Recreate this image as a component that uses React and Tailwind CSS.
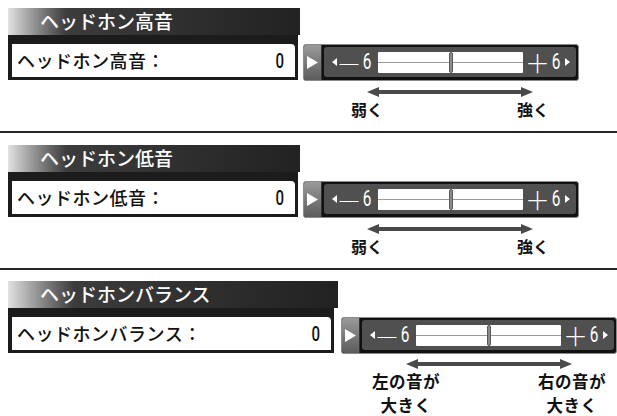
import React from "react";

const jp = { fontFamily: '"Noto Sans CJK JP", "Noto Sans", sans-serif' };
const num = { fontFamily: 'Roboto, "Liberation Sans", sans-serif' };

const sections = [
  {
    title: "ヘッドホン高音",
    head: "w-[292px]",
    body: "w-[290px]",
    gap: "ml-[5px]",
    pad: "pt-[8px] h-[131px]",
    row: "ml-[342px] w-[200px]",
    arrowX: "mx-[17px] mt-[6px]",
    labels: "mt-[2px] font-bold",
    left: ["弱く"],
    right: ["強く"],
    lw: "w-[34px] text-[16px] leading-[20px]",
  },
  {
    title: "ヘッドホン低音",
    head: "w-[292px]",
    body: "w-[290px]",
    gap: "ml-[5px]",
    pad: "pt-[12px] h-[135px]",
    row: "ml-[342px] w-[200px]",
    arrowX: "mx-[17px] mt-[6px]",
    labels: "mt-[2px] font-bold",
    left: ["弱く"],
    right: ["強く"],
    lw: "w-[34px] text-[16px] leading-[20px]",
  },
  {
    title: "ヘッドホンバランス",
    head: "w-[330px]",
    body: "w-[328px]",
    gap: "ml-[7px]",
    pad: "pt-[11px]",
    row: "ml-[362px] w-[238px]",
    arrowX: "mx-[36px] mt-[5px]",
    labels: "mt-[1px] font-semibold",
    left: ["左の音が", "大きく"],
    right: ["右の音が", "大きく"],
    lw: "w-[72px] text-[16.5px] tracking-[0.5px] leading-[23.5px]",
  },
];

const Tri = ({ dir, w = 5, h = 8, color = "#fff" }) => (
  <svg width={w} height={h} viewBox={`0 0 ${w} ${h}`}>
    {dir === "left" ? (
      <polygon points={`${w},0 ${w},${h} 0,${h / 2}`} fill={color} />
    ) : (
      <polygon points={`0,0 0,${h} ${w},${h / 2}`} fill={color} />
    )}
  </svg>
);

const Slider = () => (
  <div className="flex h-[37px] w-[276px] mt-[9px] rounded-[3px] border border-[#8a8a8a] bg-[#111] overflow-hidden">
    {/* left cap */}
    <div className="w-[18px] h-full flex items-center justify-center bg-gradient-to-b from-[#9a9a9a] to-[#5c5c5c] border-r border-[#333]">
      <Tri dir="right" w={11} h={13} />
    </div>
    <div className="flex-1 p-[2px] pb-[3px]">
      <div className="h-full rounded-[3px] bg-[#505050] flex items-center text-white" style={num}>
        <div className="w-[54px] flex items-center pl-[8px]">
          <Tri dir="left" />
          <span className="text-[22px] leading-none ml-[1px]" style={jp}>―</span>
          <span className="text-[22px] leading-none inline-block scale-x-[0.7] ml-[1px]">6</span>
        </div>
        <div className="relative w-[145px] h-[21px] bg-white rounded-[1px]">
          <div className="absolute left-0 right-0 top-[10px] h-px bg-[#9a9a9a]" />
          <div className="absolute left-[71px] top-0 w-[4px] h-[21px] rounded-[2px] bg-[#8a8a8a] border border-[#5a5a5a]" />
        </div>
        <div className="flex-1 flex items-center pl-[2px]">
          <span className="text-[25px] leading-none font-light" style={jp}>＋</span>
          <span className="text-[22px] leading-none inline-block scale-x-[0.7]">6</span>
          <span className="ml-[3px]"><Tri dir="right" /></span>
        </div>
      </div>
    </div>
  </div>
);

const Label = ({ lines, cls }) => (
  <div className={`${cls} text-center`}>
    {lines.map((t, i) => (
      <React.Fragment key={t}>
        {i > 0 && <br />}
        {t}
      </React.Fragment>
    ))}
  </div>
);

const Section = ({ s }) => (
  <div className={`${s.pad} pl-[8px]`}>
    <div
      className={`${s.head} h-[27px] flex items-center pl-[32px] text-white text-[19px] font-medium bg-gradient-to-r from-[#e2e2e2] via-[#3c3c3c] via-[20%] to-[#222]`}
      style={jp}
    >
      {s.title}
    </div>
    <div className="flex items-start">
      <div className={`${s.body} h-[45px] bg-[#1c1c1c] pl-[4px] pr-[3px] pt-[9px] pb-[3px]`}>
        <div className="h-full bg-white rounded-tr-[4px] flex items-center justify-between pl-[5px] pr-[10px]">
          <span className="text-[18px] text-[#111] font-medium tracking-[0.5px]" style={jp}>
            {s.title}：
          </span>
          <span className="text-[20px] text-[#111] font-medium inline-block scale-x-75" style={num}>0</span>
        </div>
      </div>
      <div className={s.gap}>
        <Slider />
      </div>
    </div>
    <div className={`${s.row} flex flex-col`}>
      <div className={`${s.arrowX} flex`}>
        <svg className="w-full" height="10" viewBox="0 0 166 10" preserveAspectRatio="none">
          <line x1="8" y1="5" x2="158" y2="5" stroke="#4a4a4a" strokeWidth="4" />
          <polygon points="0,5 12,0 12,10" fill="#4a4a4a" />
          <polygon points="166,5 154,0 154,10" fill="#4a4a4a" />
        </svg>
      </div>
      <div className={`flex justify-between text-[#111] ${s.labels}`} style={jp}>
        <Label lines={s.left} cls={s.lw} />
        <Label lines={s.right} cls={s.lw} />
      </div>
    </div>
  </div>
);

export default function App() {
  return (
    <div className="w-[617px] h-[416px] bg-white overflow-hidden">
      <Section s={sections[0]} />
      <div className="h-[2px] bg-[#262626]" />
      <Section s={sections[1]} />
      <div className="h-[2px] bg-[#262626]" />
      <Section s={sections[2]} />
    </div>
  );
}
